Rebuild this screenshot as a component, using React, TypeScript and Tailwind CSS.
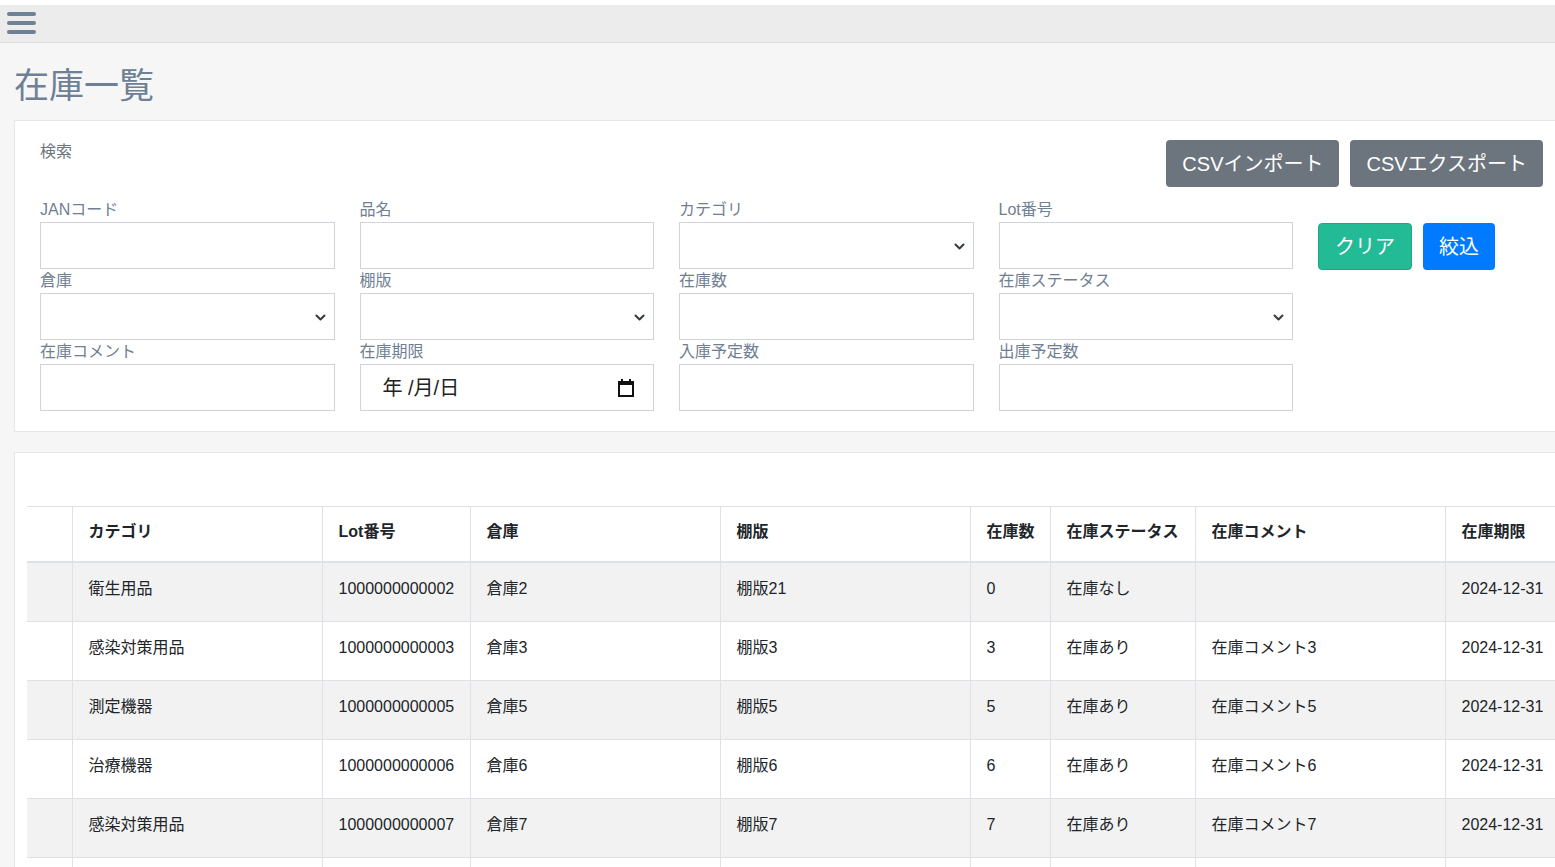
import type { FC } from "react";

const labelCls = "block text-base leading-6 text-[#6f7f93]";
const inputCls = "block w-full h-[47px] border border-[#ced4da] bg-white";

const Chevron: FC = () => (
  <svg width="11" height="8" viewBox="0 0 11 8" className="absolute right-[8px] top-[20px]">
    <path d="M1.5 1.5 L5.5 5.5 L9.5 1.5" fill="none" stroke="#343a40" strokeWidth="2" strokeLinecap="round" strokeLinejoin="round" />
  </svg>
);

const Field: FC<{ label: string; kind?: "text" | "select" | "date" }> = ({ label, kind = "text" }) => (
  <div>
    <label className={labelCls}>{label}</label>
    {kind === "text" && <div className={inputCls} />}
    {kind === "select" && (
      <div className={`${inputCls} relative`}>
        <Chevron />
      </div>
    )}
    {kind === "date" && (
      <div className={`${inputCls} flex items-center justify-between pl-[22px] pr-[19px]`}>
        <span className="text-[20px] text-[#222]">年 /月/日</span>
        <svg width="16" height="18" viewBox="0 0 16 18">
          <rect x="3" y="0" width="2" height="3" fill="#111" />
          <rect x="11" y="0" width="2" height="3" fill="#111" />
          <path d="M1 3 H15 V17 H1 Z" fill="none" stroke="#111" strokeWidth="2" />
          <rect x="1" y="3" width="14" height="3" fill="#111" />
        </svg>
      </div>
    )}
  </div>
);

const cols = [45, 250, 148, 250, 250, 80, 145, 250, 250];
const heads = ["", "カテゴリ", "Lot番号", "倉庫", "棚版", "在庫数", "在庫ステータス", "在庫コメント", "在庫期限"];

const rows = [
  ["衛生用品", "1000000000002", "倉庫2", "棚版21", "0", "在庫なし", "", "2024-12-31"],
  ["感染対策用品", "1000000000003", "倉庫3", "棚版3", "3", "在庫あり", "在庫コメント3", "2024-12-31"],
  ["測定機器", "1000000000005", "倉庫5", "棚版5", "5", "在庫あり", "在庫コメント5", "2024-12-31"],
  ["治療機器", "1000000000006", "倉庫6", "棚版6", "6", "在庫あり", "在庫コメント6", "2024-12-31"],
  ["感染対策用品", "1000000000007", "倉庫7", "棚版7", "7", "在庫あり", "在庫コメント7", "2024-12-31"],
  ["衛生用品", "1000000000008", "倉庫8", "棚版8", "8", "在庫あり", "在庫コメント8", "2024-12-31"],
];

const App: FC = () => {
  return (
    <div
      className="w-[1555px] h-[867px] overflow-hidden bg-[#f6f6f6] text-[#212529]"
      style={{ fontFamily: '"Liberation Sans", "Noto Sans CJK JP", sans-serif' }}
    >
      <div className="pt-[5px] bg-white">
        <header className="h-[38px] bg-[#ececec] border-b border-[#dcdfe4] pl-[7px] pt-[7px]">
          <svg width="29" height="23" viewBox="0 0 29 23">
            <rect x="0" y="0" width="29" height="4" rx="2" fill="#6f8197" />
            <rect x="0" y="9" width="29" height="4" rx="2" fill="#6f8197" />
            <rect x="0" y="18" width="29" height="4" rx="2" fill="#6f8197" />
          </svg>
        </header>
      </div>

      <main className="px-[14px] w-[1600px]">
        <h1 className="mt-[22px] mb-[13px] text-[35px] leading-[42px] font-normal text-[#6e8096]">在庫一覧</h1>

        <section className="w-[1555px] bg-white border border-[#e4e7eb] pl-[25px] pr-[25px] pt-[19px] pb-[20px]">
          <div className="flex justify-between items-start">
            <p className="text-base leading-6 text-[#6c757d]">検索</p>
            <div className="flex gap-[11px]">
              <button className="h-[47px] px-[16px] rounded bg-[#6c757d] text-white text-[20px]">CSVインポート</button>
              <button className="h-[47px] px-[16px] rounded bg-[#6c757d] text-white text-[20px]">CSVエクスポート</button>
            </div>
          </div>

          <div className="mt-[11px] flex gap-[25px]">
            <div className="grid grid-cols-[repeat(4,294.5px)] gap-x-[25px]">
              <Field label="JANコード" />
              <Field label="品名" />
              <Field label="カテゴリ" kind="select" />
              <Field label="Lot番号" />
              <Field label="倉庫" kind="select" />
              <Field label="棚版" kind="select" />
              <Field label="在庫数" />
              <Field label="在庫ステータス" kind="select" />
              <Field label="在庫コメント" />
              <Field label="在庫期限" kind="date" />
              <Field label="入庫予定数" />
              <Field label="出庫予定数" />
            </div>
            <div className="pt-[25px] flex gap-[11px] items-start">
              <button className="h-[47px] px-[16px] rounded border border-[#1fa883] bg-[#22bb96] text-white text-[20px]">クリア</button>
              <button className="h-[47px] px-[16px] rounded bg-[#007bff] text-white text-[20px]">絞込</button>
            </div>
          </div>
        </section>

        <section className="mt-[20px] w-[1555px] h-[500px] overflow-hidden bg-white border border-[#e4e7eb] px-[12px] pt-[53px]">
          <table className="table-fixed border-collapse w-[1668px]">
            <colgroup>
              {cols.map((w, i) => (
                <col key={i} style={{ width: w }} />
              ))}
            </colgroup>
            <thead>
              <tr className="border-t border-b-2 border-[#dee2e6]">
                {heads.map((h, i) => (
                  <th key={i} className="px-4 pt-[13px] pb-[17px] text-left text-base leading-6 font-bold whitespace-nowrap border-l border-[#dee2e6] first:border-l-0">
                    {h}
                  </th>
                ))}
              </tr>
            </thead>
            <tbody>
              {rows.map((r, ri) => (
                <tr key={ri} className={`border-b border-[#dee2e6] ${ri % 2 === 0 ? "bg-[#f2f2f2]" : "bg-white"}`}>
                  <td className="px-4 pt-[14px] pb-[20px]" />
                  {r.map((c, ci) => (
                    <td key={ci} className="px-4 pt-[14px] pb-[20px] text-base leading-6 border-l border-[#dee2e6] whitespace-nowrap">
                      {c}
                    </td>
                  ))}
                </tr>
              ))}
            </tbody>
          </table>
        </section>
      </main>
    </div>
  );
};

export default App;
